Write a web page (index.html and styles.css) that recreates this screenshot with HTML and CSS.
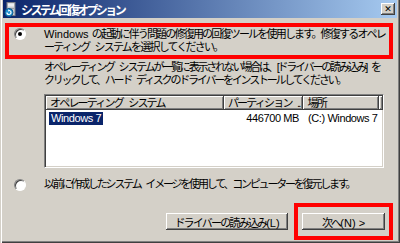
FILE: index.html
```html
<!DOCTYPE html>
<html lang="ja">
<head>
  <meta charset="UTF-8" />
  <title>システム回復オプション</title>
  <link rel="stylesheet" href="styles.css">
</head>
<body>
  <div class="window">
    <div class="titlebar">
      <svg class="app-icon" width="14" height="15" viewBox="0 0 14 15">
        <rect x="3" y="0.5" width="8" height="13" fill="#c9ccd2" stroke="#7c8088"/>
        <rect x="4" y="1.5" width="6" height="3" fill="#eef0f3"/>
        <rect x="4" y="6" width="6" height="1" fill="#9a9ea6"/>
        <circle cx="5" cy="10.5" r="4" fill="#1e8fd0" stroke="#0d5a8e"/>
        <path d="M3 10.5a2 2 0 1 0 2-2" fill="none" stroke="#fff" stroke-width="1.2"/>
        <path d="M4.2 7.2l1.6 1.3-1.6 1.2z" fill="#fff"/>
      </svg>
      <span class="title">システム回復オプション</span>
      <button class="close">&#x2715;</button>
    </div>

    <div class="option highlight">
      <span class="radio checked"></span>
      <p class="option-text"><span class="en">Windows </span>の起動に伴う問題の修復用の回復ツールを使用します。修復するオペレ<br>ーティング システムを選択してください。</p>
    </div>

    <p class="hint">オペレーティング システムが一覧に表示されない場合は、[ドライバーの読み込み] を<br>クリックして、ハード ディスクのドライバーをインストールしてください。</p>

    <div class="listview">
      <div class="lv-header">
        <span class="col col-os">オペレーティング システム</span>
        <span class="col col-size">パーティション ..</span>
        <span class="col col-loc">場所</span>
        <span class="col col-rest"></span>
      </div>
      <div class="lv-row">
        <span class="cell col-os"><span class="selected">Windows 7</span></span>
        <span class="cell col-size">446700 MB</span>
        <span class="cell col-loc">(C:) Windows 7</span>
      </div>
    </div>

    <div class="option second">
      <span class="radio"></span>
      <p class="option-text">以前に作成したシステム イメージを使用して、コンピューターを復元します。</p>
    </div>

    <div class="buttons">
      <button class="btn btn-load">ドライバーの読み込み<span class="en">(L)</span></button>
      <div class="highlight next-wrap">
        <button class="btn btn-next">次へ<span class="en">(N) &gt;</span></button>
      </div>
    </div>
  </div>
</body>
</html>
```

FILE: styles.css
```css
body {
  margin: 0;
  font-family: "Liberation Sans", "Noto Sans CJK JP", sans-serif;
  font-size: 11px;
  color: #000;
  background: #d4d0c8;
}
p {
  margin: 0;
}
.en {
  letter-spacing: 0;
  word-spacing: 0;
}
.window {
  box-sizing: border-box;
  width: 400px;
  height: 243px;
  background: #d4d0c8;
  box-shadow: inset 1px 0 #d4d0c8, inset 2px 0 #fff, inset -1px -1px #404040, inset -2px -2px #808080;
  overflow: hidden;
}
.titlebar {
  display: flex;
  align-items: center;
  height: 18px;
  margin: 0 3px;
  padding: 0 2px 0 1px;
  background: linear-gradient(to right, #0a246a, #a6caf0);
  color: #fff;
}
.app-icon {
  flex: none;
}
.title {
  margin-left: 3px;
  font-weight: bold;
  font-size: 12px;
  letter-spacing: -2.6px;
  white-space: nowrap;
}
.close {
  margin-left: auto;
  width: 14px;
  height: 12px;
  padding: 0;
  border: none;
  background: #d4d0c8;
  box-shadow: inset -1px -1px #404040, inset 1px 1px #fff, inset -2px -2px #808080;
  font: bold 9px "DejaVu Sans", sans-serif;
  line-height: 12px;
  color: #000;
}
.highlight {
  border: 4px solid #ff0000;
}
.option {
  display: flex;
  align-items: flex-start;
}
.option-text,
.hint,
.col,
.btn {
  letter-spacing: -1.8px;
  word-spacing: 4px;
  white-space: nowrap;
}
.option-text {
  line-height: 13px;
}
.option.highlight {
  height: 27px;
  margin: 5px 7px 0 5px;
  padding-top: 1px;
}
.radio {
  flex: none;
  position: relative;
  box-sizing: border-box;
  width: 12px;
  height: 12px;
  margin: 0 18px 0 5px;
  border-radius: 50%;
  background: #fff;
  border: 1px solid;
  border-color: #808080 #fff #fff #808080;
  box-shadow: inset 1px 1px #404040;
}
.radio.checked::after {
  content: "";
  position: absolute;
  left: 3px;
  top: 3px;
  width: 4px;
  height: 4px;
  border-radius: 50%;
  background: #000;
}
.hint {
  margin: 2px 0 0 44px;
  line-height: 13px;
  letter-spacing: -2.2px;
}
.listview {
  box-sizing: border-box;
  width: 340px;
  height: 74px;
  margin: 7px 0 0 44px;
  background: #fff;
  border: 1px solid;
  border-color: #808080 #fff #fff #808080;
  box-shadow: inset 1px 1px #404040, inset -1px -1px #d4d0c8;
  padding: 1px 0 0 1px;
}
.lv-header {
  display: flex;
  height: 14px;
}
.col {
  box-sizing: border-box;
  height: 14px;
  padding-left: 4px;
  background: #d4d0c8;
  box-shadow: inset -1px -1px #404040, inset 1px 1px #fff, inset -2px -2px #808080;
  line-height: 14px;
  overflow: hidden;
}
.col-os {
  width: 179px;
}
.col-size {
  width: 80px;
}
.col-loc {
  width: 76px;
}
.col-rest {
  flex: 1;
}
.lv-row {
  display: flex;
  margin-top: 2px;
  height: 13px;
  line-height: 13px;
}
.cell {
  box-sizing: border-box;
  padding-left: 3px;
  white-space: nowrap;
  letter-spacing: -0.4px;
}
.cell.col-size {
  padding: 0 6px 0 0;
  text-align: right;
}
.selected {
  display: inline-block;
  padding: 0 2px;
  background: #0a246a;
  color: #fff;
}
.option.second {
  margin-top: 10px;
}
.option.second .option-text {
  letter-spacing: -2.2px;
}
.option.second .radio {
  margin-left: 14px;
  margin-top: 1px;
}
.buttons {
  display: flex;
  align-items: center;
  justify-content: flex-end;
  margin: 12px 7px 0 0;
}
.btn {
  box-sizing: border-box;
  height: 17px;
  padding: 0;
  border: none;
  background: #d4d0c8;
  box-shadow: inset -1px -1px #404040, inset 1px 1px #fff, inset -2px -2px #808080;
  font: inherit;
  color: #000;
}
.btn-load {
  width: 122px;
  margin-right: 6px;
}
.next-wrap {
  padding: 6px 4px;
}
.btn-next {
  width: 83px;
}
```
